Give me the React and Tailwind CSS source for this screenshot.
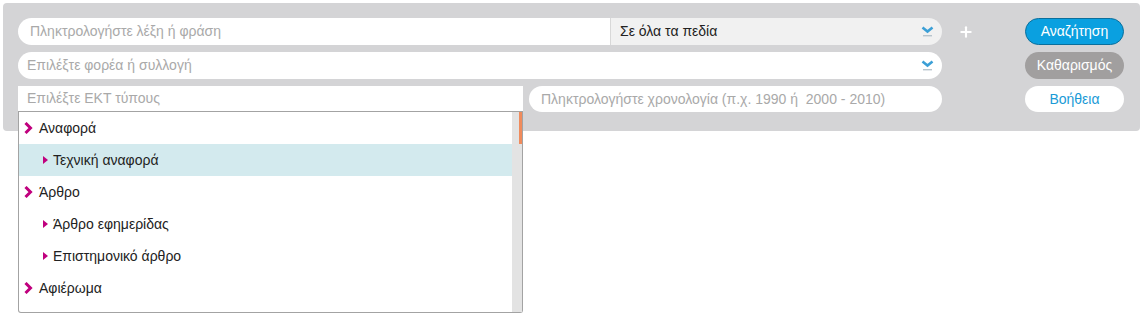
import { Plus } from "lucide-react";

const types = [
  { label: "Αναφορά", level: 1 },
  { label: "Τεχνική αναφορά", level: 2, active: true },
  { label: "Άρθρο", level: 1 },
  { label: "Άρθρο εφημερίδας", level: 2 },
  { label: "Επιστημονικό άρθρο", level: 2 },
  { label: "Αφιέρωμα", level: 1 },
];

const font = { fontFamily: '"Liberation Sans", Arial, sans-serif' };

const SelectArrow = () => (
  <svg width="13" height="13" viewBox="0 0 13 13" className="shrink-0">
    <path d="M1.5 2.5 L6.5 6.5 L11.5 2.5" fill="none" stroke="#3b9fd6" strokeWidth="2.6" />
    <rect x="2" y="10" width="9" height="1.4" fill="#b7c4cc" />
  </svg>
);

const BigChevron = () => (
  <svg width="9" height="12" viewBox="0 0 9 12" className="shrink-0">
    <path d="M1.5 1 L6.5 6 L1.5 11" fill="none" stroke="#c0007e" strokeWidth="3" />
  </svg>
);

const SmallTriangle = () => (
  <svg width="5" height="8" viewBox="0 0 5 8" className="shrink-0">
    <path d="M0 0 L5 4 L0 8 Z" fill="#c0007e" />
  </svg>
);

const TypeMenu = () => (
  <div className="absolute left-0 top-[26px] z-10 flex h-[201px] w-[505px] rounded-b-[3px] border border-t-0 border-[#a3a3a3] bg-white">
    <ul className="flex-1">
      {types.map((t) => (
        <li
          key={t.label}
          className={`flex h-[32px] items-center text-[14px] text-[#222] ${
            t.level === 1 ? "gap-[6px] pl-[5px]" : "gap-[5px] pl-[24px]"
          } ${t.active ? "bg-[#d3eaee]" : ""}`}
        >
          {t.level === 1 ? <BigChevron /> : <SmallTriangle />}
          <span>{t.label}</span>
        </li>
      ))}
    </ul>
    <div className="flex w-[10px] justify-end bg-[#e3e3e3]">
      <div className="h-[32px] w-[3px] bg-[#f08b5c]" />
    </div>
  </div>
);

export default function App() {
  return (
    <div className="min-h-[319px] bg-white pl-[3px] pt-[3px]" style={font}>
      <div className="flex h-[128px] w-[1137px] rounded-[4px] bg-[#d4d4d6] pl-[15px] pt-[15px]">
        {/* fields */}
        <div className="flex w-[924px] flex-col gap-[7px]">
          <div className="flex h-[27px]">
            <div className="flex w-[592px] items-center rounded-l-full bg-white pl-[12px] text-[14px] text-[#a9a9a9]">
              Πληκτρολογήστε λέξη ή φράση
            </div>
            <div className="flex flex-1 items-center justify-between rounded-r-full border-l border-[#d8d8d8] bg-[#f1f1f1] pl-[9px] pr-[8px] text-[14px] text-[#222]">
              <span>Σε όλα τα πεδία</span>
              <SelectArrow />
            </div>
          </div>
          <div className="flex h-[27px] items-center justify-between rounded-full bg-white pl-[9px] pr-[8px] text-[14px] text-[#a9a9a9]">
            <span>Επιλέξτε φορέα ή συλλογή</span>
            <SelectArrow />
          </div>
          <div className="flex h-[26px] gap-[6px]">
            <div className="relative w-[505px]">
              <div className="flex h-[26px] items-center border-b border-[#a3a3a3] bg-white pl-[9px] text-[14px] text-[#a9a9a9]">
                Επιλέξτε ΕΚΤ τύπους
              </div>
              <TypeMenu />
            </div>
            <div className="flex flex-1 items-center rounded-full bg-white pl-[12px] text-[14px] text-[#a9a9a9]">
              Πληκτρολογήστε χρονολογία (π.χ. 1990 ή&nbsp; 2000 - 2010)
            </div>
          </div>
        </div>

        {/* add row */}
        <div className="flex h-[27px] w-[83px] items-center pl-[16px]">
          <Plus size={16} strokeWidth={3.2} color="#ffffff" />
        </div>

        {/* buttons */}
        <div className="flex w-[99px] flex-col gap-[7px] text-[14px]">
          <button className="h-[27px] rounded-full border border-[#0a6f9c] bg-[#0aa0e0] text-white">
            Αναζήτηση
          </button>
          <button className="h-[27px] rounded-full bg-[#a19f9f] text-white">
            Καθαρισμός
          </button>
          <button className="h-[26px] rounded-full bg-white text-[#1a9ad6]">
            Βοήθεια
          </button>
        </div>
      </div>
    </div>
  );
}
